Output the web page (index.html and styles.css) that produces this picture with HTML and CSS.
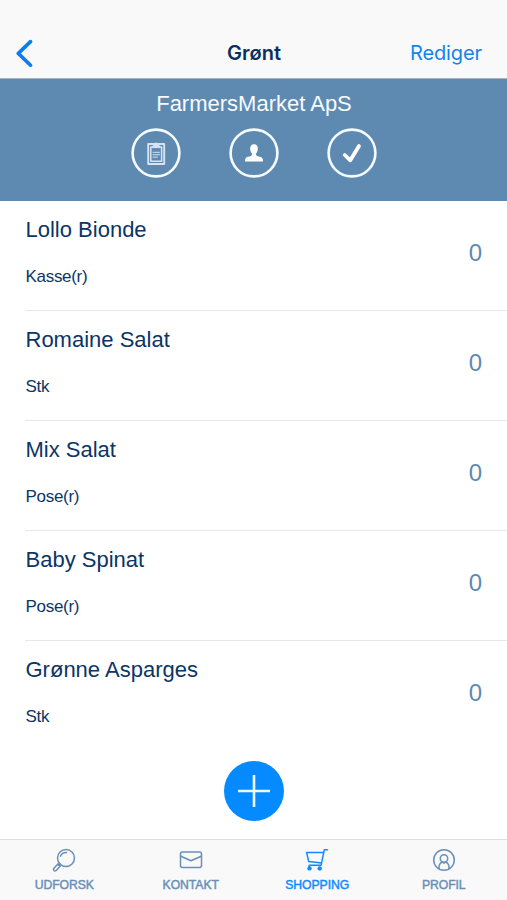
FILE: index.html
```html
<!DOCTYPE html>
<html lang="da">
<head>
<meta charset="utf-8">
<title>Grønt</title>
<link rel="stylesheet" href="styles.css">
</head>
<body>
<div class="app">
  <header class="nav">
    <svg class="back" width="18" height="28" viewBox="0 0 18 28"><path d="M15.500 2.600 3.300 14.400l12.200 11.800"/></svg>
    <h1 class="nav-title">Grønt</h1>
    <a class="edit">Rediger</a>
  </header>
  <section class="vendor">
    <h2 class="vendor-name">FarmersMarket ApS</h2>
    <div class="actions">
      <svg width="50" height="50" viewBox="0 0 50 50"><circle class="ring" cx="25" cy="25" r="23.400"/><g class="clip"><path class="board" d="M17.200 16h16v20h-16z"/><path class="paper" d="M19.800 19h10.800v14.200h-10.800z"/><path d="M22 24.300h6.500M22 26.700h6.500M22 29.100h4.500"/><path class="clasp" d="M21.300 19.200c.3-1.800 1.400-2.100 2.400-2.400 0-2.400 3-2.400 3 0 1 .3 2.100.6 2.400 2.400z"/></g></svg>
      <svg width="50" height="50" viewBox="0 0 50 50"><circle class="ring" cx="25" cy="25" r="23.400"/><path class="solid" d="M25 16.200c2.700 0 4 2 3.800 4.600-.1 2.400-1 4-2 5 0 2.200 2 2.700 4.200 3 2.200.4 3 1.800 3 4.700H16c0-2.900.8-4.300 3-4.700 2.200-.3 4.200-.8 4.200-3-1-1-1.900-2.600-2-5-.2-2.600 1.100-4.600 3.800-4.600z"/></svg>
      <svg width="50" height="50" viewBox="0 0 50 50"><circle class="ring" cx="25" cy="25" r="23.400"/><path class="tick" d="m17.800 27 5.500 5.300 8.700-14.300"/></svg>
    </div>
  </section>
  <main class="list">
    <article class="item"><div><h3>Lollo Bionde</h3><p>Kasse(r)</p></div><span class="count">0</span></article>
    <article class="item"><div><h3>Romaine Salat</h3><p>Stk</p></div><span class="count">0</span></article>
    <article class="item"><div><h3>Mix Salat</h3><p>Pose(r)</p></div><span class="count">0</span></article>
    <article class="item"><div><h3>Baby Spinat</h3><p>Pose(r)</p></div><span class="count">0</span></article>
    <article class="item"><div><h3>Grønne Asparges</h3><p>Stk</p></div><span class="count">0</span></article>
  </main>
  <div class="add-row">
    <svg width="60" height="60" viewBox="0 0 60 60"><circle cx="30" cy="30" r="30"/><path d="M14 30h32M30 14v32"/></svg>
  </div>
  <footer class="tabs">
    <a class="tab"><svg width="24" height="24" viewBox="0 0 24 24"><circle cx="14" cy="10" r="8.500"/><path d="M8.500 8.200c1.300-2.600 3.500-3.900 6-3.700M7.800 15.800l-1.300 1.400M6.100 15.700l2.200 2.200-4.100 4.600c-1.700 1.300-3.400-.6-2.200-2.200z"/></svg><span>UDFORSK</span></a>
    <a class="tab"><svg width="24" height="24" viewBox="0 0 24 24"><rect x="1.500" y="4" width="21" height="15.500" rx="2"/><path d="m1.800 8.200 10.200 4.600 10.200-4.600"/></svg><span>KONTAKT</span></a>
    <a class="tab active"><svg width="24" height="24" viewBox="0 0 24 24"><path d="M22.500 1.800h-3.200l-3.200 15.400H4.200v2.300M1.500 4.600H18.500M1.700 4.600l2 9 13 1.300"/><circle class="wheel" cx="4.500" cy="20.400" r="2.200"/><circle class="wheel" cx="14.700" cy="20.400" r="2.200"/></svg><span>SHOPPING</span></a>
    <a class="tab"><svg width="24" height="24" viewBox="0 0 24 24"><circle cx="12" cy="12" r="10.300"/><circle cx="12" cy="10.500" r="3.700"/><path d="M7 20.500c-.3-3.500 1-5.500 3.500-6.500M17 20.500c.3-3.500-1-5.500-3.500-6.500M10.200 14.200l1.800.9 1.800-.9"/></svg><span>PROFIL</span></a>
  </footer>
</div>
</body>
</html>
```
FILE: styles.css
```css
* { box-sizing: border-box; }
body, h1, h2, h3, p { margin: 0; font-weight: 400; }
body { font-family: "Liberation Sans", Arial, sans-serif; background: #fff; color: #0b3566; }
svg { display: block; flex: none; fill: none; stroke-linecap: round; stroke-linejoin: round; }
.app { height: 900px; display: flex; flex-direction: column; overflow: hidden; }
.nav {
  height: 79px; flex: none; padding: 27px 25px 0 15px;
  display: grid; grid-template-columns: 1fr auto 1fr; align-items: center;
  background: #f9f9f9; border-bottom: 1px solid #a3b4c4;
}
.back { stroke: #087df5; stroke-width: 3.600; }
.nav-title { font: 600 20px/26px Inter, sans-serif; color: #0c2f5c; padding-left: 11px; }
.edit { font: 400 20px/26px Inter, sans-serif; letter-spacing: -.1px; color: #1583ee; justify-self: end; }
.vendor { height: 122px; flex: none; background: #5e8ab2; padding-top: 12px; text-align: center; }
.vendor-name { font-size: 22px; line-height: 26px; color: #f7fbff; padding-left: 1px; }
.actions { display: flex; justify-content: center; gap: 48px; margin-top: 10.500px; }
.ring { stroke: #f5faff; stroke-width: 2.600; }
.clip path { stroke: #d5e3f3; stroke-width: 1; }
.clip .board { stroke-width: 1.900; }
.clip .paper { stroke-width: 1.500; }
.clip .clasp { fill: #d5e3f3; }
.solid { fill: #fff; }
.tick { stroke: #fff; stroke-width: 3.800; }
.item {
  height: 110px; margin-left: 25px; padding-right: 25px;
  display: flex; justify-content: space-between; border-bottom: 1px solid #e7e8ea;
}
.item:last-child { border-bottom: 0; }
.item h3 { font-size: 22px; line-height: 26px; margin-top: 16px; padding-left: .5px; }
.item p { font-size: 17px; line-height: 20px; margin-top: 24px; padding-left: .5px; letter-spacing: -.3px; }
.count { font-size: 24px; line-height: 28px; margin-top: 38px; color: #5e8ab2; }
.add-row { flex: 1; display: flex; justify-content: center; padding-top: 10px; }
.add-row circle { fill: #058bff; }
.add-row path { stroke: #effaff; stroke-width: 2.600; stroke-linecap: butt; }
.tabs {
  height: 61px; flex: none; display: grid; grid-template-columns: repeat(4, 1fr);
  background: #f9f9f9; border-top: 1px solid #dcdee0; padding-left: 1px;
}
.tab {
  display: flex; flex-direction: column; align-items: center; padding-top: 8px;
  font-size: 12.200px; line-height: 16px; color: #6990b8;
}
.tab span { margin-top: 5px; letter-spacing: -.05px; -webkit-text-stroke: .45px currentColor; }
.tab svg { stroke: currentColor; stroke-width: 1.500; }
.tab .wheel { fill: currentColor; stroke: none; }
.tab.active { color: #118aff; }
```
